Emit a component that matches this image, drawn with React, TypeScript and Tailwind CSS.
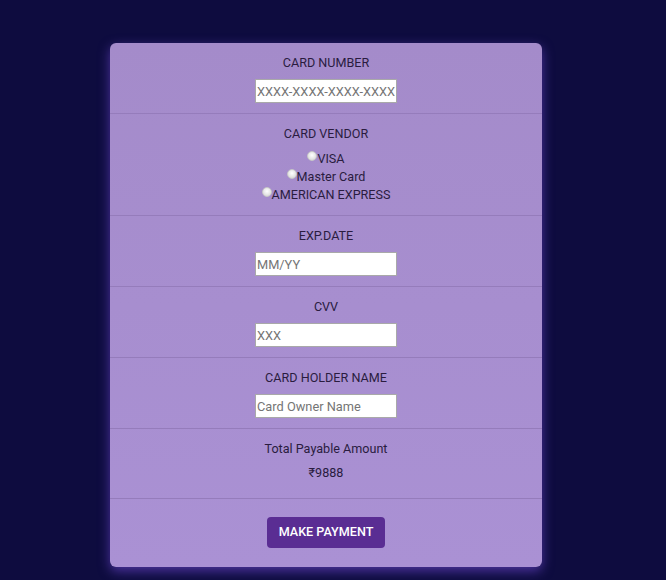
import { useState } from "react";

type FieldProps = {
  label: string;
  placeholder: string;
};

function Field({ label, placeholder }: FieldProps) {
  return (
    <div className="flex flex-col items-center px-4 pt-[12px] pb-[10px] border-b border-[#957cbb]">
      <label className="text-[12.6px] leading-4 text-[#2a1c3f] uppercase">{label}</label>
      <input
        type="text"
        placeholder={placeholder}
        className="mt-[8px] w-[142px] h-6 bg-white border border-[#a9a9a9] px-[1px] text-[12.8px] text-[#333] placeholder:text-[#757575] outline-none"
      />
    </div>
  );
}

const vendors = ["VISA", "Master Card", "AMERICAN EXPRESS"];

export default function App() {
  const [vendor, setVendor] = useState("");

  return (
    <div className="min-h-[580px] bg-[#0e0c3f] pt-[43px] font-['Roboto',sans-serif]">
      <div className="ml-[110px] w-[432px] rounded-md bg-gradient-to-b from-[#a48bca] to-[#aa91d4] shadow-[0_4px_12px_rgba(98,64,190,0.75)] overflow-hidden">
        <Field label="Card Number" placeholder="XXXX-XXXX-XXXX-XXXX" />

        <div className="flex flex-col items-center pt-[12px] pb-[11px] border-b border-[#957cbb]">
          <span className="text-[12.6px] leading-4 text-[#2a1c3f]">CARD VENDOR</span>
          <div className="mt-[8px] flex flex-col items-center">
            {vendors.map((v) => (
              <label key={v} className="flex items-start h-[18px] text-[12.6px] leading-[18px] text-[#2a1c3f] cursor-pointer">
                <input
                  type="radio"
                  name="vendor"
                  checked={vendor === v}
                  onChange={() => setVendor(v)}
                  className="appearance-none mt-[1px] w-[10px] h-[10px] rounded-full border border-[#c8c8c8] bg-[radial-gradient(circle_at_50%_40%,#ffffff_0%,#e6e6e6_55%,#cfcfcf_100%)] checked:bg-[radial-gradient(circle,#5a2d93_35%,#ffffff_40%)]"
                />
                <span>{v}</span>
              </label>
            ))}
          </div>
        </div>

        <Field label="EXP.DATE" placeholder="MM/YY" />
        <Field label="CVV" placeholder="XXX" />
        <Field label="Card Holder Name" placeholder="Card Owner Name" />

        <div className="flex flex-col items-center pt-[12px] pb-[17px] border-b border-[#957cbb] text-[12.6px] leading-4 text-[#2a1c3f]">
          <span>Total Payable Amount</span>
          <span className="mt-[8px]">₹9888</span>
        </div>

        <div className="flex justify-center pt-[18px] pb-[19px]">
          <button className="w-[118px] h-[31px] rounded-[4px] bg-[#5a2d93] text-white text-[12.6px] font-medium">
            MAKE PAYMENT
          </button>
        </div>
      </div>
    </div>
  );
}
